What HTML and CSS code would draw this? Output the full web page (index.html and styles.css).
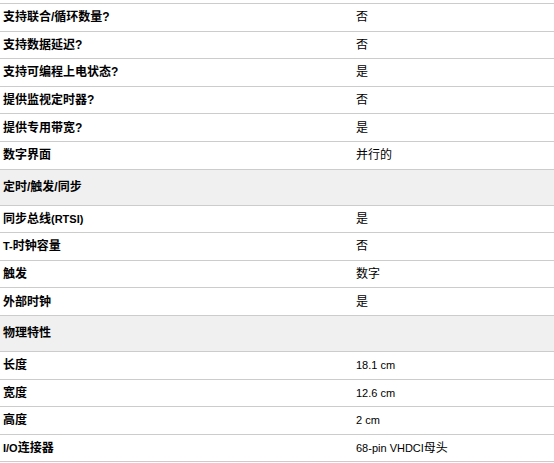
FILE: index.html
```html
<!DOCTYPE html>
<html lang="zh-CN">
<head>
<meta charset="utf-8">
<title>规格</title>
<link rel="stylesheet" href="styles.css">
</head>
<body>
<div class="spec">
  <div class="row"><div class="k">支持联合/循环数量?</div><div class="v">否</div></div>
  <div class="row"><div class="k">支持数据延迟?</div><div class="v">否</div></div>
  <div class="row"><div class="k">支持可编程上电状态?</div><div class="v">是</div></div>
  <div class="row"><div class="k">提供监视定时器?</div><div class="v">否</div></div>
  <div class="row"><div class="k">提供专用带宽?</div><div class="v">是</div></div>
  <div class="row"><div class="k">数字界面</div><div class="v">并行的</div></div>
  <div class="row section"><div class="k">定时/触发/同步</div><div class="v"></div></div>
  <div class="row"><div class="k">同步总线<span class="lat">(RTSI)</span></div><div class="v">是</div></div>
  <div class="row"><div class="k"><span class="lat">T-</span>时钟容量</div><div class="v">否</div></div>
  <div class="row"><div class="k">触发</div><div class="v">数字</div></div>
  <div class="row"><div class="k">外部时钟</div><div class="v">是</div></div>
  <div class="row section"><div class="k">物理特性</div><div class="v"></div></div>
  <div class="row"><div class="k">长度</div><div class="v"><span class="lat">18.1 cm</span></div></div>
  <div class="row"><div class="k">宽度</div><div class="v"><span class="lat">12.6 cm</span></div></div>
  <div class="row"><div class="k">高度</div><div class="v"><span class="lat">2 cm</span></div></div>
  <div class="row"><div class="k"><span class="lat">I/O</span>连接器</div><div class="v"><span class="lat">68-pin VHDCI</span>母头</div></div>
</div>
</body>
</html>
```
FILE: styles.css
```css
html, body {
  margin: 0;
  padding: 0;
  background: #ffffff;
}
body {
  font-family: "Liberation Sans", "Noto Sans CJK SC", sans-serif;
  font-size: 12px;
  color: #000000;
}
.spec {
  margin-top: 3px;
  border-top: 1px solid #cccccc;
  display: flex;
  flex-direction: column;
}
.row {
  display: grid;
  grid-template-columns: 353px 1fr;
  align-items: center;
  height: 27.6px;
  box-sizing: border-box;
  border-bottom: 1px solid #cccccc;
}
.row.section {
  height: 36px;
  background: #f0f0f0;
}
.k, .v {
  padding: 0 3px;
  line-height: 14px;
  white-space: nowrap;
}
.k {
  font-weight: bold;
}
.lat {
  font-size: 11px;
}
```
